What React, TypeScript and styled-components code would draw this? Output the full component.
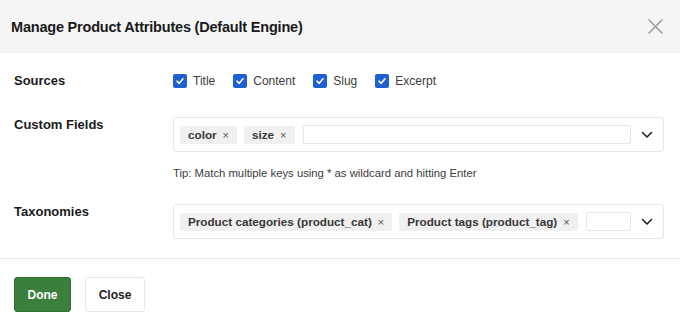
import React from "react";
import styled, { createGlobalStyle } from "styled-components";

const GlobalStyle = createGlobalStyle`
  html, body {
    margin: 0;
    padding: 0;
    background: #ffffff;
  }
  body {
    font-family: "Liberation Sans", Arial, sans-serif;
    color: #1e1e1e;
  }
`;

const Dialog = styled.div`
  width: 680px;
  height: 326px;
  background: #fff;
  display: flex;
  flex-direction: column;
  overflow: hidden;
`;

const Header = styled.div`
  height: 53px;
  background: #f5f5f5;
  display: flex;
  align-items: center;
  justify-content: space-between;
  padding: 0 17px 0 11px;
  box-sizing: border-box;
`;

const Title = styled.h1`
  margin: 0;
  font-size: 14.5px;
  font-weight: 700;
  color: #1a1a1a;
  letter-spacing: -0.2px;
`;

const CloseIcon = styled.button`
  border: 0;
  background: transparent;
  padding: 0;
  width: 16px;
  height: 16px;
  display: flex;
  align-items: center;
  justify-content: center;
  cursor: pointer;
`;

const Body = styled.div`
  padding: 20px 16px 0 14px;
  display: flex;
  flex-direction: column;
`;

const Row = styled.div<{ $gap?: number; $center?: boolean }>`
  display: flex;
  align-items: ${(p) => (p.$center ? "center" : "flex-start")};
  margin-bottom: ${(p) => p.$gap ?? 0}px;
`;

const Label = styled.div`
  width: 159px;
  flex-shrink: 0;
  font-size: 13px;
  font-weight: 700;
  line-height: 16px;
  color: #1a1a1a;
`;

const Field = styled.div`
  flex: 1;
  min-width: 0;
  display: flex;
  flex-direction: column;
`;

const Checks = styled.div`
  display: flex;
  align-items: center;
  gap: 18px;
  height: 16px;
`;

const Check = styled.label`
  display: flex;
  align-items: center;
  gap: 6px;
  font-size: 12px;
  color: #3c3c3c;
`;

const Box = styled.span`
  width: 14px;
  height: 14px;
  border-radius: 2px;
  background: #1f5fcf;
  display: flex;
  align-items: center;
  justify-content: center;
`;

const Select = styled.div`
  height: 35px;
  box-sizing: border-box;
  border: 1px solid #e6e6e6;
  border-radius: 3px;
  display: flex;
  align-items: center;
  padding: 0 9px 0 6px;
  gap: 7px;
`;

const Tag = styled.span`
  height: 18px;
  background: #f0f0f0;
  border-radius: 2px;
  display: flex;
  align-items: center;
  gap: 6px;
  padding: 0 8px;
  font-size: 11.7px;
  font-weight: 700;
  color: #383838;
  white-space: nowrap;
  flex-shrink: 0;
`;

const TagX = styled.span`
  font-size: 11px;
  font-weight: 400;
  color: #555;
`;

const Input = styled.input`
  height: 19px;
  box-sizing: border-box;
  border: 1px solid #e6e6e6;
  border-radius: 2px;
  outline: none;
  flex: 1;
  min-width: 0;
  margin-left: 1px;
`;

const Chevron = styled.span`
  width: 14px;
  display: flex;
  align-items: center;
  justify-content: center;
  margin-left: 2px;
`;

const Tip = styled.div`
  font-size: 11.3px;
  color: #3c3c3c;
  margin-top: 15px;
`;

const Divider = styled.div`
  height: 1px;
  background: #e9e9e9;
  margin-top: 19px;
`;

const Footer = styled.div`
  display: flex;
  gap: 14px;
  padding: 18px 14px 0 14px;
`;

const Button = styled.button<{ $primary?: boolean }>`
  height: 35px;
  box-sizing: border-box;
  padding: 0;
  border-radius: 3px;
  font-family: "Liberation Sans", Arial, sans-serif;
  font-size: 12px;
  font-weight: 700;
  cursor: pointer;
  border: 1px solid ${(p) => (p.$primary ? "#2f6f31" : "#e8e8e8")};
  background: ${(p) => (p.$primary ? "#3b7f3d" : "#fff")};
  color: ${(p) => (p.$primary ? "#fff" : "#222")};
  width: ${(p) => (p.$primary ? 57 : 60)}px;
`;

const CheckMark = () => (
  <svg width="10" height="10" viewBox="0 0 10 10">
    <path d="M2 5.2 L4.2 7.3 L8 2.8" fill="none" stroke="#fff" strokeWidth="1.6" strokeLinecap="round" strokeLinejoin="round" />
  </svg>
);

const ChevronDown = () => (
  <svg width="12" height="8" viewBox="0 0 12 8">
    <path d="M1.5 1.5 L6 6 L10.5 1.5" fill="none" stroke="#222" strokeWidth="1.6" strokeLinecap="round" strokeLinejoin="round" />
  </svg>
);

const sources = ["Title", "Content", "Slug", "Excerpt"];

export default function App() {
  return (
    <>
      <GlobalStyle />
      <Dialog>
        <Header>
          <Title>Manage Product Attributes (Default Engine)</Title>
          <CloseIcon aria-label="Close">
            <svg width="15" height="15" viewBox="0 0 15 15">
              <path d="M1 1 L14 14 M14 1 L1 14" stroke="#9a9a9a" strokeWidth="1.5" strokeLinecap="round" />
            </svg>
          </CloseIcon>
        </Header>
        <Body>
          <Row $center $gap={28}>
            <Label>Sources</Label>
            <Checks>
              {sources.map((s) => (
                <Check key={s}>
                  <Box>
                    <CheckMark />
                  </Box>
                  {s}
                </Check>
              ))}
            </Checks>
          </Row>
          <Row $gap={25}>
            <Label>Custom Fields</Label>
            <Field>
              <Select>
                <Tag>
                  color <TagX>×</TagX>
                </Tag>
                <Tag>
                  size <TagX>×</TagX>
                </Tag>
                <Input />
                <Chevron>
                  <ChevronDown />
                </Chevron>
              </Select>
              <Tip>Tip: Match multiple keys using * as wildcard and hitting Enter</Tip>
            </Field>
          </Row>
          <Row>
            <Label>Taxonomies</Label>
            <Field>
              <Select>
                <Tag>
                  Product categories (product_cat) <TagX>×</TagX>
                </Tag>
                <Tag>
                  Product tags (product_tag) <TagX>×</TagX>
                </Tag>
                <Input />
                <Chevron>
                  <ChevronDown />
                </Chevron>
              </Select>
            </Field>
          </Row>
        </Body>
        <Divider />
        <Footer>
          <Button $primary>Done</Button>
          <Button>Close</Button>
        </Footer>
      </Dialog>
    </>
  );
}
